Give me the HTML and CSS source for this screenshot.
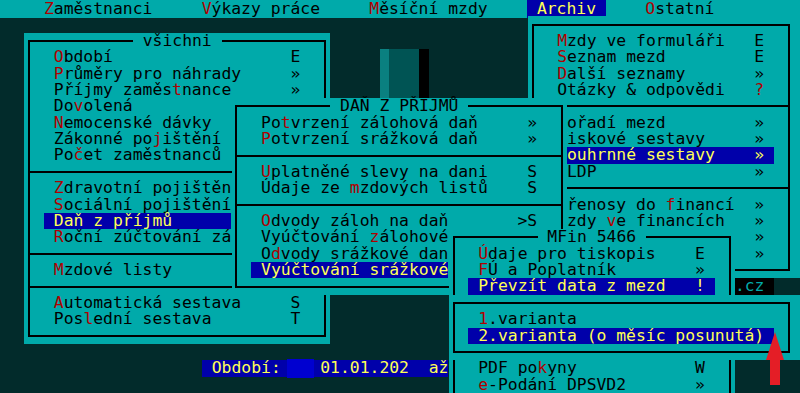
FILE: index.html
```html
<!DOCTYPE html>
<html lang="cs">

<head>
    <meta charset="UTF-8">
    <meta name="viewport" content="width=device-width, initial-scale=1.0">
    <title>Mzdy - Archiv</title>
    <link rel="stylesheet" href="styles.css">
</head>

<body>
    <div class="screen">
        <!-- top menu -->
        <div class="menubar">    <span class="hk">Z</span>aměstnanci     <span class="hk">V</span>ýkazy práce     <span class="hk">M</span>ěsíční mzdy    <span class="sel"> Archiv </span>    <span class="hk">O</span>statní</div>

        <!-- background leftovers on the desktop -->
        <div class="logo">
            <div class="b1"></div>
            <div class="b2"></div>
            <div class="b3"></div>
        </div>
        <div class="cz">.cz</div>
        <div class="status"> Období: <span class="field"></span> 01.01.202  až</div>

        <!-- Archiv -->
        <div class="win win-right win-wide">
            <div class="frame">
                <div class="ln">  <span class="hk">M</span>zdy ve formuláři   E</div>
                <div class="ln">  <span class="hk">S</span>eznam mezd         E</div>
                <div class="ln">  <span class="hk">D</span>alší seznamy       »</div>
                <div class="ln">  Otázky &amp; odpovědi   <span class="hk">?</span></div>
                <div class="sep"></div>
                <div class="ln">  <span class="hk">P</span>ořadí mezd         »</div>
                <div class="ln">  <span class="hk">T</span>iskové sestavy     »</div>
                <div class="ln"> <span class="sel"> Souhrnné sestavy    » </span></div>
                <div class="ln">   LDP                »</div>
                <div class="sep"></div>
                <div class="ln">  Přenosy do <span class="hk">f</span>inancí  »</div>
                <div class="ln">  Mzdy <span class="hk">v</span>e financích   »</div>
                <div class="ln key-only">»</div>
                <div class="ln key-only">»</div>
            </div>
        </div>

        <!-- všichni -->
        <div class="win win-left">
            <div class="title"><span> všichni </span></div>
            <div class="frame">
                <div class="ln">  <span class="hk">O</span>bdobí                  E</div>
                <div class="ln">  <span class="hk">P</span>růměry pro náhrady     »</div>
                <div class="ln">  Příjmy zaměs<span class="hk">t</span>nance      »</div>
                <div class="ln">  Do<span class="hk">v</span>olená</div>
                <div class="ln">  <span class="hk">N</span>emocenské dávky</div>
                <div class="ln">  Zákonné po<span class="hk">j</span>ištění</div>
                <div class="ln">  Po<span class="hk">č</span>et zaměstnanců</div>
                <div class="sep"></div>
                <div class="ln">  <span class="hk">Z</span>dravotní pojištěn</div>
                <div class="ln">  <span class="hk">S</span>ociální pojištění</div>
                <div class="ln"> <span class="sel"> Daň z příjmů      </span></div>
                <div class="ln">  <span class="hk">R</span>oční zúčtování zá</div>
                <div class="sep"></div>
                <div class="ln">  <span class="hk">M</span>zdové listy</div>
                <div class="sep"></div>
                <div class="ln">  <span class="hk">A</span>utomatická sestava     S</div>
                <div class="ln">  Pos<span class="hk">l</span>ední sestava        T</div>
            </div>
        </div>

        <!-- DAŇ Z PŘÍJMŮ -->
        <div class="win win-mid">
            <div class="title"><span> DAŇ Z PŘÍJMŮ </span></div>
            <div class="frame">
                <div class="ln">  Po<span class="hk">t</span>vrzení zálohová daň     »</div>
                <div class="ln">  <span class="hk">P</span>otvrzení srážková daň     »</div>
                <div class="sep"></div>
                <div class="ln">  <span class="hk">U</span>platněné slevy na dani    S</div>
                <div class="ln">  Údaje ze <span class="hk">m</span>zdových listů    S</div>
                <div class="sep"></div>
                <div class="ln">  <span class="hk">O</span>dvody záloh na daň       &gt;S</div>
                <div class="ln">  Vyúčtování <span class="hk">z</span>álohové</div>
                <div class="ln">  O<span class="hk">d</span>vody srážkové dan</div>
                <div class="ln"> <span class="sel"> Vyúčtování srážkové</span></div>
            </div>
        </div>

        <!-- MFin 5466 -->
        <div class="win win-mfin">
            <div class="title"><span> MFin 5466 </span></div>
            <div class="frame">
                <div class="ln">  <span class="hk">Ú</span>daje pro tiskopis    E</div>
                <div class="ln">  <span class="hk">F</span>Ú a Poplatník        »</div>
                <div class="ln"> <span class="sel"> Převzít data z mezd   ! </span></div>
                <div class="ln"></div>
                <div class="ln"></div>
                <div class="ln"></div>
                <div class="ln"></div>
                <div class="ln">  PDF po<span class="hk">k</span>yny            W</div>
                <div class="ln">  <span class="hk">e</span>-Podání DPSVD2       »</div>
            </div>
        </div>

        <!-- varianta submenu -->
        <div class="win win-sub win-wide">
            <div class="frame">
                <div class="ln">  <span class="hk">1</span>.varianta</div>
                <div class="ln"> <span class="sel"> 2.varianta (o měsíc posunutá) </span></div>
            </div>
        </div>

        <svg class="arrow" width="22" height="57" viewBox="0 0 22 57">
            <path d="M11 2 L20 30 L16 30 L16 55 L6 55 L6 30 L2 30 Z" fill="#e41e26" />
        </svg>
    </div>
</body>

</html>
```

FILE: styles.css
```css
* {
    box-sizing: border-box;
}

body {
    margin: 0;
    background-color: #022b2b;
}

/* 80 x 24 text screen, one cell = 9.87 x 16.375 */
.screen {
    position: relative;
    width: 800px;
    height: 393px;
    overflow: hidden;
    background-color: #022b2b;
    font-family: "DejaVu Sans Mono", monospace;
    font-size: 16.39px;
    line-height: 16.375px;
    color: #000;
}

.menubar {
    height: 17.5px;
    padding-top: 1.4px;
    padding-left: 4.5px;
    background-color: #00aaaa;
    white-space: pre;
}

.menubar .sel {
    margin-top: -1.4px;
    height: 17.5px;
    padding-top: 1.4px;
}

.hk {
    color: #b00000;
}

.sel {
    display: inline-block;
    height: 16.375px;
    vertical-align: top;
    background-color: #0000aa;
    color: #ffff55;
}

/* windows */
.win {
    position: absolute;
    padding: 7.1875px 3.935px;
    background-color: #00aaaa;
    z-index: 1;
}

.win-wide {
    padding-right: 9.9px;
}

.frame {
    height: 100%;
    border: 2px solid #000;
    padding: 7.1875px 3.935px;
}

.title {
    position: absolute;
    top: 0;
    left: 0;
    right: 0;
    height: 16.375px;
    text-align: center;
    white-space: pre;
}

.title span {
    display: inline-block;
    height: 16.375px;
    background-color: #00aaaa;
}

.ln {
    height: 16.375px;
    white-space: pre;
}

.key-only {
    padding-left: 217.14px;
}

.sep {
    position: relative;
    height: 16.375px;
}

.sep::before {
    content: '';
    position: absolute;
    left: -5.935px;
    right: -5.935px;
    top: 7.1875px;
    height: 2px;
    background-color: #000;
}

.win-left {
    left: 24.24px;
    top: 32.75px;
    width: 305.97px;
    height: 311.125px;
}

.win-right {
    left: 527.6px;
    top: 16.375px;
    width: 272.4px;
    height: 262px;
}

.win-mid {
    left: 231.51px;
    top: 98.25px;
    width: 335.58px;
    height: 196.5px;
    z-index: 2;
}

.win-mfin {
    left: 448.65px;
    top: 229.25px;
    width: 286.23px;
    height: 196.5px;
    z-index: 3;
}

.win-sub {
    left: 448.65px;
    top: 294.75px;
    width: 351.35px;
    height: 65.5px;
    z-index: 4;
}

/* desktop pieces */
.logo {
    position: absolute;
    left: 379.6px;
    top: 49.125px;
    height: 49.125px;
    display: flex;
}

.b1 {
    width: 9.87px;
    background-color: #0a8080;
}

.b2 {
    width: 29.61px;
    background-color: #005454;
}

.b3 {
    width: 9.87px;
    background-color: #000;
}

.cz {
    position: absolute;
    left: 734.9px;
    top: 278.375px;
    width: 39.48px;
    height: 16.375px;
    background-color: #000;
    color: #00aaaa;
    white-space: pre;
}

.status {
    position: absolute;
    left: 201.9px;
    top: 360.25px;
    height: 16.375px;
    background-color: #0000aa;
    color: #ffff55;
    white-space: pre;
}

.field {
    display: inline-block;
    width: 27px;
    height: 19px;
    margin: -1px -3.56px 0 -3.7px;
    vertical-align: top;
    background-color: #0000d0;
}

.arrow {
    position: absolute;
    left: 764px;
    top: 330px;
    z-index: 5;
}
```
